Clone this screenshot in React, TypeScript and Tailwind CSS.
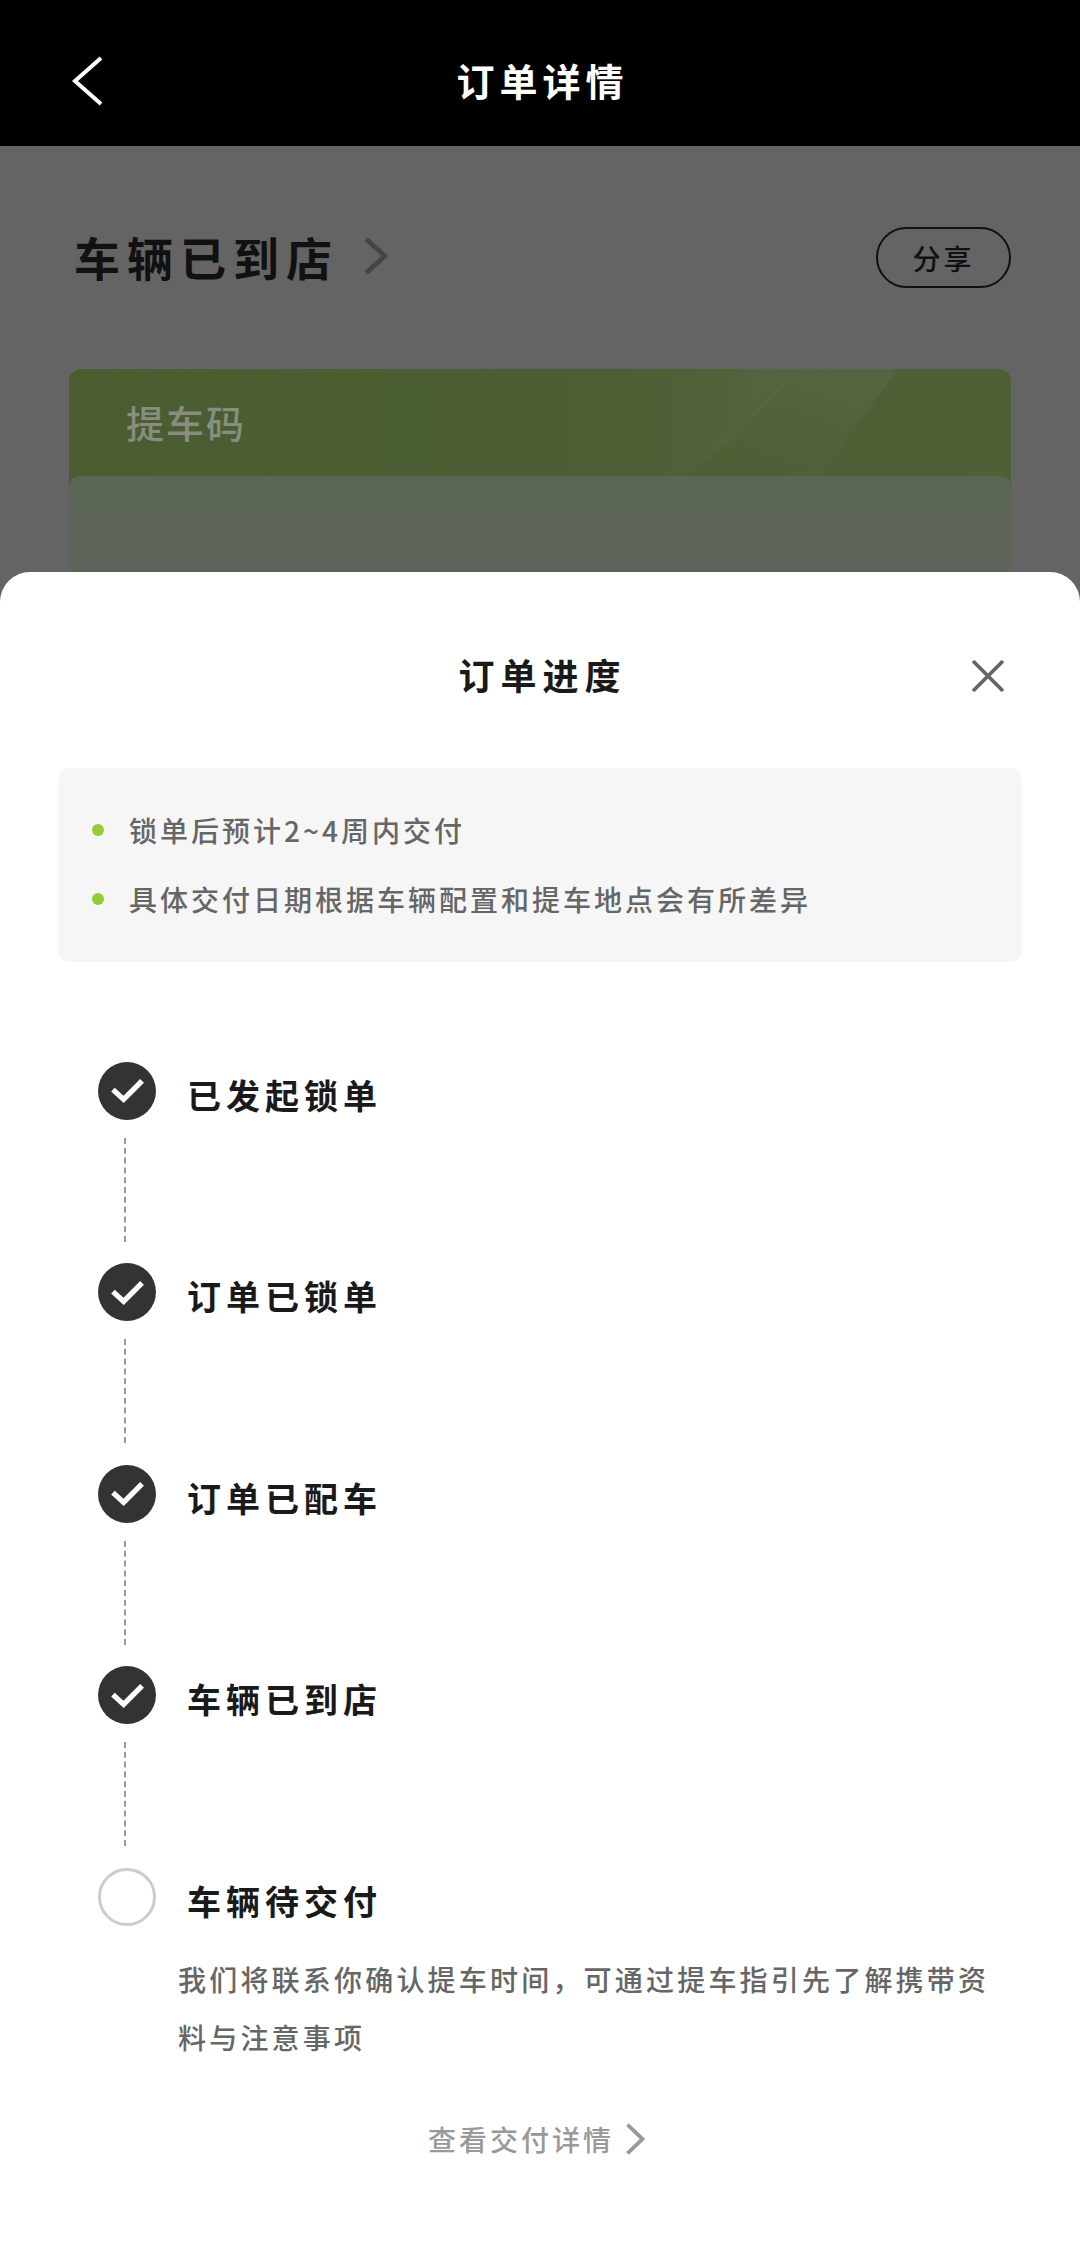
const FONT = "font-['Noto_Sans_CJK_SC','Noto_Sans',sans-serif]"

const STEPS = ['已发起锁单', '订单已锁单', '订单已配车', '车辆已到店']

function Chevron({ className }: { className: string }) {
  return (
    <svg viewBox="0 0 24 38" fill="none" className={className} preserveAspectRatio="none" aria-hidden="true">
      <path d="M3 2l18 17L3 36" stroke="currentColor" strokeWidth="4.5" />
    </svg>
  )
}

function CheckCircle() {
  return (
    <div className="flex size-[58px] shrink-0 items-center justify-center rounded-full bg-[#333333]">
      <svg viewBox="0 0 34 26" fill="none" className="w-[33px]" aria-hidden="true">
        <path d="M2 12l11 10L32 3" stroke="white" strokeWidth="5.5" />
      </svg>
    </div>
  )
}

function DoneStep({ label }: { label: string }) {
  return (
    <div className="flex h-[201.4px] gap-[31px]">
      <div className="flex w-[58px] flex-col items-center">
        <CheckCircle />
        <div className="mt-[18px] h-[104px] w-0 -translate-x-[2px] border-l-2 border-dashed border-[#999999]" />
      </div>
      <p className="mt-[8px] text-[34px] leading-[50px] font-bold tracking-[5px] text-[#1a1a1a]">{label}</p>
    </div>
  )
}

function CardStripes() {
  return (
    <svg viewBox="0 0 942 107" className="absolute top-0 left-0 h-[107px] w-[942px]" aria-hidden="true">
      <defs>
        <linearGradient id="stripeA" x1="0" y1="0" x2="1" y2="0">
          <stop offset="0" stopColor="#5a6a4a" stopOpacity="0" />
          <stop offset="1" stopColor="#5a6a4a" stopOpacity="0.55" />
        </linearGradient>
        <linearGradient id="stripeB" x1="0.8" y1="0" x2="0.2" y2="1">
          <stop offset="0" stopColor="#5a6a4a" stopOpacity="0.5" />
          <stop offset="1" stopColor="#5a6a4a" stopOpacity="0" />
        </linearGradient>
      </defs>
      <path d="M560 0H731L670 64 620 107H560z" fill="url(#stripeA)" />
      <path d="M731 0H829L752 107H610z" fill="url(#stripeB)" />
    </svg>
  )
}

export default function App() {
  return (
    <div className={`${FONT} relative h-[2268px] w-[1080px] overflow-hidden bg-[#646464]`}>
      <header className="relative flex h-[146px] items-center justify-center bg-black pt-[14px] pl-[5px]">
        <svg viewBox="0 0 32 50" fill="none" className="absolute top-[56px] left-[71px] w-[32px] text-white" aria-hidden="true">
          <path d="M30 2L4 25l26 23" stroke="currentColor" strokeWidth="4" />
        </svg>
        <h1 className="text-[38px] leading-[50px] font-bold tracking-[5px] text-white">订单详情</h1>
      </header>

      <section className="px-[69px]">
        <div className="flex h-[223px] items-start justify-between pt-[80px]">
          <div className="flex items-center gap-[24px] pl-[5px]">
            <h2 className="text-[46px] leading-[60px] font-bold tracking-[7px] text-[#111111]">车辆已到店</h2>
            <Chevron className="h-[38px] w-[25px] text-[#444444]" />
          </div>
          <button
            type="button"
            className="mt-[1px] flex h-[61px] w-[135px] items-center justify-center rounded-full border-2 border-[#111111] text-[28px] font-medium tracking-[3px] text-[#111111]"
          >
            分享
          </button>
        </div>

        <div className="relative h-[300px] overflow-hidden rounded-[12px] bg-gradient-to-r from-[#4a5c30] to-[#4f6037]">
          <CardStripes />
          <p className="relative pt-[28px] pl-[57px] text-[38px] leading-[50px] font-medium tracking-[2px] text-[#888d80]">提车码</p>
          <div className="absolute inset-x-0 top-[107px] h-[200px] rounded-[10px] bg-gradient-to-b from-[#5a6553] to-[#626461]" />
        </div>
      </section>

      <section className="absolute inset-x-0 bottom-0 h-[1696px] rounded-t-[30px] bg-white">
        <div className="relative flex h-[196px] justify-center pt-[77px] pl-[5px]">
          <h2 className="text-[36px] leading-[50px] font-bold tracking-[6px] text-[#1a1a1a]">订单进度</h2>
          <svg viewBox="0 0 34 34" fill="none" className="absolute top-[87px] left-[971px] w-[34px]" aria-hidden="true">
            <path d="M2 2l30 30M32 2L2 32" stroke="#666666" strokeWidth="3.8" />
          </svg>
        </div>

        <div className="mx-[58px] flex h-[194px] flex-col gap-[27px] rounded-[12px] bg-[#f6f6f6] pt-[41px] pl-[34px]">
          <div className="flex items-center gap-[25px]">
            <span className="size-[12px] rounded-full bg-[#94cc35]" />
            <p className="text-[28px] leading-[42px] font-medium tracking-[3px] text-[#666666]">锁单后预计2~4周内交付</p>
          </div>
          <div className="flex items-center gap-[25px]">
            <span className="size-[12px] rounded-full bg-[#94cc35]" />
            <p className="text-[28px] leading-[42px] font-medium tracking-[3px] text-[#666666]">具体交付日期根据车辆配置和提车地点会有所差异</p>
          </div>
        </div>

        <div className="mt-[100px] pl-[98px]">
          {STEPS.map((label) => (
            <DoneStep key={label} label={label} />
          ))}

          <div className="flex gap-[31px]">
            <div className="size-[58px] shrink-0 rounded-full border-[3px] border-[#cccccc]" />
            <p className="mt-[8px] text-[34px] leading-[50px] font-bold tracking-[5px] text-[#1a1a1a]">车辆待交付</p>
          </div>
        </div>

        <p className="mt-[24px] ml-[178px] w-[830px] text-[28px] leading-[58px] font-medium tracking-[3.2px] text-[#666666]">
          我们将联系你确认提车时间，可通过提车指引先了解携带资料与注意事项
        </p>

        <div className="mt-[52px] flex items-center justify-center gap-[11px] pr-[7px]">
          <span className="text-[28px] leading-[42px] font-medium tracking-[3px] text-[#999999]">查看交付详情</span>
          <Chevron className="h-[32px] w-[20px] text-[#999999]" />
        </div>
      </section>
    </div>
  )
}
